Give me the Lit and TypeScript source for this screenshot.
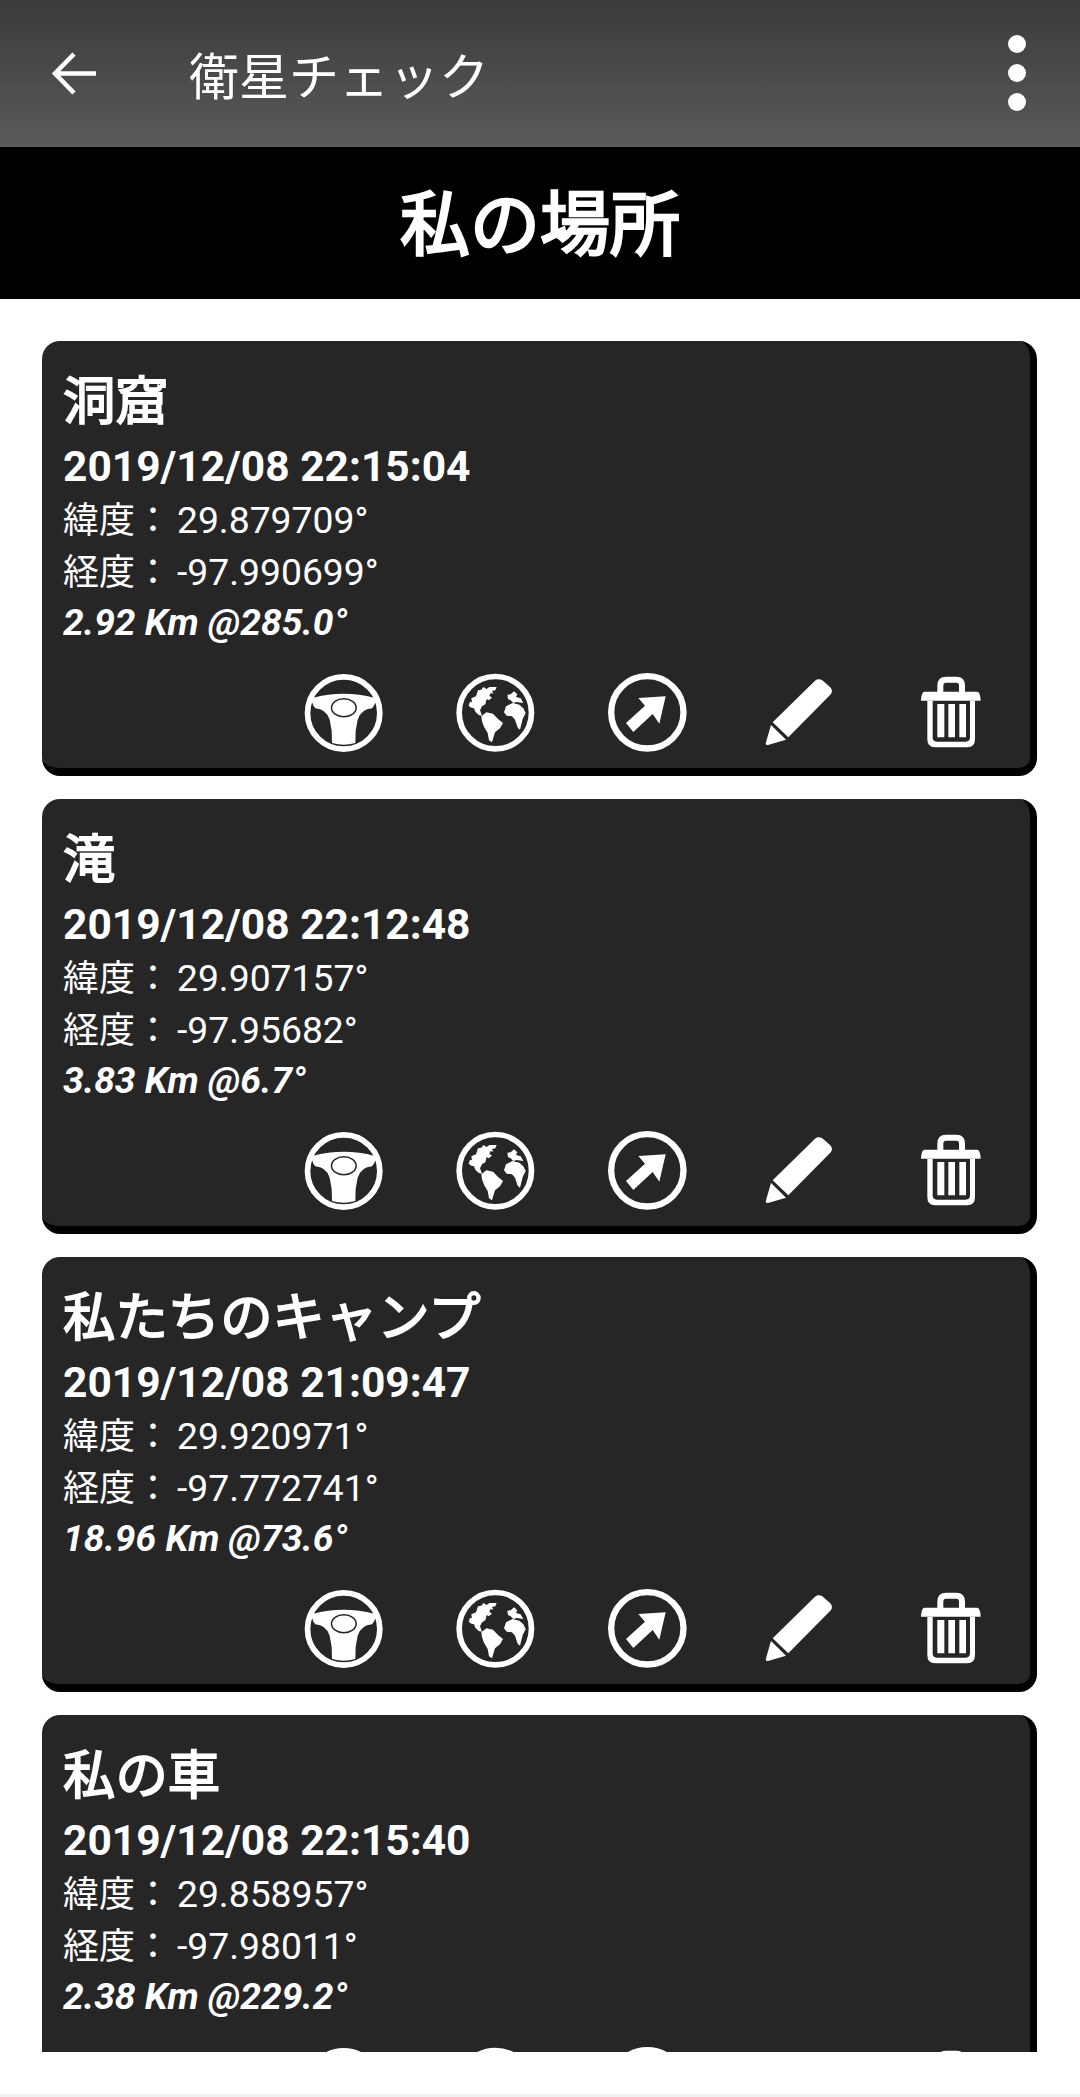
import { LitElement, html, css, svg } from "lit";
import { customElement } from "lit/decorators.js";

const wheel = svg`<svg class="ic" viewBox="0 0 288 288" fill="none"><circle cx="143" cy="150" r="108.5" stroke="#fff" stroke-width="17"/><path fill="#fff" d="M50 105 Q143 80 236 105 Q242 120 228 136 Q196 138 185 170 Q176 205 178 240 Q143 250 108 240 Q110 205 101 170 Q90 138 58 136 Q44 120 50 105 Z"/><ellipse cx="143.500" cy="134" rx="37" ry="27" fill="#fff" stroke="#262626" stroke-width="4.500"/></svg>`;

const globe = svg`<svg class="ic" viewBox="0 0 288 288" fill="none"><circle cx="142" cy="149" r="108.5" stroke="#fff" stroke-width="17"/><g fill="#fff">
<path d="M62 128 L66 116 L72 118 L70 106 L84 100 L90 82 L100 80 L106 72 L116 78 L124 72 L146 72 L142 82 L132 84 L136 92 L128 90 L124 98 L132 104 L122 112 L116 108 L112 124 L102 130 L96 142 L102 158 L92 156 L82 146 L78 136 L70 134 Z"/>
<path d="M100 160 L115 148 L135 152 L150 168 L165 180 L156 196 L141 208 L136 224 L132 238 L123 232 L119 210 L108 191 L102 175 Z"/>
<path d="M180 108 L178 95 L188 94 L198 85 L208 94 L204 102 L218 106 L226 120 L206 117 L196 120 L188 112 Z"/>
<path d="M168 148 L174 130 L194 120 L214 125 L226 136 L233 150 L224 168 L216 200 L209 194 L201 170 L192 160 L176 158 Z"/></g></svg>`;

const go = svg`<svg class="ic" viewBox="0 0 288 288" fill="none"><circle cx="142" cy="148" r="108.500" stroke="#fff" stroke-width="19"/><path fill="#fff" d="M197 100 L115 105 L135 128 L78 180 L100 207 L158 153 L178 182 Z"/></svg>`;

const pencil = svg`<svg class="ic" viewBox="0 0 288 288"><g transform="translate(24 18)" fill="#fff"><path d="M165 35 Q174 28 186 33 L210 54 Q220 64 213 75 L85 205 L38 160 Z"/><path d="M33 168 L78 212 L24 228 Q15 230 18 220 Z"/></g></svg>`;

const trash = svg`<svg class="ic" viewBox="0 0 288 288"><g transform="translate(18 18)"><path fill="none" stroke="#fff" stroke-width="18" d="M91 70 V50 Q91 32 108 32 H139 Q156 32 156 50 V70"/><path fill="#fff" d="M33 95 Q34 68 44 68 H201 Q211 68 212 95 Z"/><path fill="#fff" d="M52 95 V210 Q52 235 75 235 H172 Q195 235 195 210 V95 H180 V205 Q180 218 167 218 H80 Q68 218 68 205 V95 Z"/><path fill="#fff" d="M82 105 H103 V205 H82 Z M115 105 H135 V205 H115 Z M148 105 H168 V205 H148 Z"/></g></svg>`;

const items = [
  ["洞窟", "2019/12/08 22:15:04", "29.879709°", "-97.990699°", "2.92 Km @285.0°"],
  ["滝", "2019/12/08 22:12:48", "29.907157°", "-97.95682°", "3.83 Km @6.7°"],
  ["私たちのキャンプ", "2019/12/08 21:09:47", "29.920971°", "-97.772741°", "18.96 Km @73.6°"],
  ["私の車", "2019/12/08 22:15:40", "29.858957°", "-97.98011°", "2.38 Km @229.2°"],
];

@customElement("app-root")
export class AppRoot extends LitElement {
  static styles = css`
    :host { display: block; height: 2097px; background: #fff; overflow: hidden; position: relative;
      font-family: Roboto, "Noto Sans CJK JP", sans-serif; color: #fff; }
    .bar { height: 147px; background: linear-gradient(#3b3b3b, #5a5a5a); display: flex; align-items: center; padding: 0 54px 0 52px; box-sizing: border-box; }
    .back { width: 44px; height: 44px; display: block; }
    .t { margin-left: 93px; font: 400 50px/1 "Noto Sans CJK JP", sans-serif; flex: 1; position: relative; top: -1px; }
    .dots { display: flex; flex-direction: column; gap: 11px; margin-top: -1px; }
    .dots i { width: 18px; height: 18px; border-radius: 50%; background: #fff; display: block; }
    .head { height: 152px; background: #000; display: flex; align-items: center; justify-content: center;
      padding-bottom: 7px; box-sizing: border-box; font: 400 70px/1 "Noto Sans CJK JP", sans-serif; -webkit-text-stroke: 2.6px #fff; }
    .list { height: 1753px; padding: 42px 43px 0 42px; box-sizing: border-box; overflow: hidden; display: flex; flex-direction: column; gap: 23px; }
    .card { flex: none; height: 435px; box-sizing: border-box; background: #262626; border-radius: 18px; border-right: 7px solid #000; border-bottom: 8px solid #000; padding: 24px 0 0 21px; }
    .name { font: 400 52.400px/64px "Noto Sans CJK JP", sans-serif; -webkit-text-stroke: 1.8px #fff; }
    .date { font: 700 42.500px/50px Roboto, sans-serif; margin: 13px 0 3px; }
    .row { font: 400 37.300px/50.500px Roboto, "Noto Sans CJK JP", sans-serif; }
    .lab { font-size: 36px; margin-right: -3px; }
    .dist { font: italic 700 37.200px/50.500px Roboto, sans-serif; margin-top: -1.5px; }
    .icons { display: flex; gap: 56px; margin: 15.500px 0 0 233px; align-items: center; }
    .ic { width: 96px; height: 96px; display: block; flex: none; }
    .nav { position: absolute; left: 0; right: 0; bottom: 0; height: 3px; background: #f1f1f1; }
  `;
  render() {
    return html`
      <div class="bar">
        <svg class="back" viewBox="0 0 44 44" fill="none" stroke="#fff" stroke-width="4.5"><path d="M44 21.500 H4 M22 2 L3 21.500 L22 41"/></svg>
        <div class="t">衛星チェック</div>
        <div class="dots"><i></i><i></i><i></i></div>
      </div>
      <div class="head">私の場所</div>
      <div class="list">
        ${items.map(([n, d, la, lo, di]) => html`
          <div class="card">
            <div class="name">${n}</div>
            <div class="date">${d}</div>
            <div class="row"><span class="lab">緯度： </span>${la}</div>
            <div class="row"><span class="lab">経度： </span>${lo}</div>
            <div class="dist">${di}</div>
            <div class="icons">${wheel}${globe}${go}${pencil}${trash}</div>
          </div>`)}
      </div>
      <div class="nav"></div>
    `;
  }
}
